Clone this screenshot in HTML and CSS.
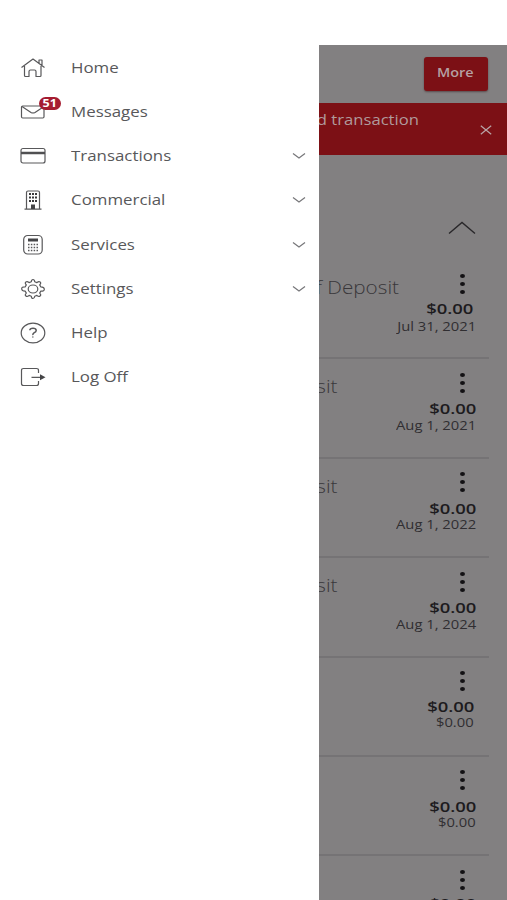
FILE: index.html
```html
<!DOCTYPE html>
<html lang="en">
<head>
<meta charset="utf-8">
<title>Accounts</title>
<link rel="stylesheet" href="styles.css">
</head>
<body>
<div class="app">
  <nav class="menu">
    <a class="item"><svg class="icon" viewBox="0 0 26 24"><path d="M1.500 11.500 13 3l11.500 8.500M4.500 10v9.500q0 1 1 1H9v-5q0-1.500 1.500-1.500h4q1.500 0 1.500 1.500v5h4q1 0 1-1V10M19 7V4h3v5"/></svg><span class="label">Home</span></a>
    <a class="item"><svg class="icon" viewBox="0 0 26 24"><rect x="1.500" y="6" width="22.500" height="12" rx="1.200"/><path d="m2 6.500 9 6q2 1 4 0l9-6"/></svg><b class="badge"><span>51</span></b><span class="label">Messages</span></a>
    <a class="item"><svg class="icon" viewBox="0 0 26 24"><rect x="1" y="4.500" width="24" height="14.500" rx="2"/><path class="thick" d="M1 9h24"/></svg><span class="label">Transactions</span><svg class="chevron" viewBox="0 0 14 8"><path d="m1 1.500 6 4.500 6-4.500"/></svg></a>
    <a class="item"><svg class="icon" viewBox="0 0 26 24"><path d="M6.500 21V4.500Q6.500 3 8 3h10q1.500 0 1.500 1.500V21M4.500 21.200h17"/><path class="dots" d="M9 6h2m1 0h2m1 0h2M9 9.500h2m1 0h2m1 0h2M9 13h2m1 0h2m1 0h2"/><path class="solid" d="M11 21v-4.500h4V21z"/></svg><span class="label">Commercial</span><svg class="chevron" viewBox="0 0 14 8"><path d="m1 1.500 6 4.500 6-4.500"/></svg></a>
    <a class="item"><svg class="icon" viewBox="0 0 26 24"><rect x="3.700" y="2.500" width="18.500" height="18.500" rx="4"/><path class="solid" d="M8 5.500h10v3H8z"/><path class="keys" d="M8 11.500h10M8 14.500h10M8 17.500h10"/></svg><span class="label">Services</span><svg class="chevron" viewBox="0 0 14 8"><path d="m1 1.500 6 4.500 6-4.500"/></svg></a>
    <a class="item"><svg class="icon" viewBox="0 0 26 24"><ellipse cx="13" cy="12" rx="4.800" ry="4"/><path d="M11.300 4.800Q11.500 2.500 13 2.500t1.700 2.300l2.200.8q1.800-1.700 3.200-.7t-.4 3l1 1.900q3.300-.1 3.600 2.200t-3.600 2.200l-1 1.900q1.800 1.800.4 2.900t-3.200-.6l-2.200.8Q14.500 21.500 13 21.500t-1.700-2.300l-2.200-.8q-1.800 1.700-3.200.6t.4-2.900l-1-1.900Q2 14.300 1.700 12t3.600-2.200l1-1.900Q4.500 5.900 5.900 4.900t3.200.7z"/></svg><span class="label">Settings</span><svg class="chevron" viewBox="0 0 14 8"><path d="m1 1.500 6 4.500 6-4.500"/></svg></a>
    <a class="item"><svg class="icon" viewBox="0 0 26 24"><ellipse cx="13" cy="12" rx="11.800" ry="9.800"/><path class="mark" d="M9.800 9.300Q10 7.300 13 7.300t3.200 2.100Q16.200 10.800 14 11.800q-1.300.7-1.200 2.300M12.800 15.400v1.200"/></svg><span class="label">Help</span></a>
    <a class="item"><svg class="icon" viewBox="0 0 26 24"><path d="M18.500 8V5.500q0-2-2-2H3.500q-2 0-2 2v13q0 2 2 2h13q2 0 2-2V16M11.500 12.300H21"/><path class="solid" d="M20 9.300v6l5.500-3z"/></svg><span class="label">Log Off</span></a>
  </nav>
  <main class="page">
    <header class="bar"><button class="more"><span>More</span></button></header>
    <section class="alert"><span class="alert-text">d transaction</span><svg class="close" viewBox="0 0 12 10"><path d="m.8.800 10.400 8.400m0-8.400L.8 9.200"/></svg></section>
    <div class="group"><svg class="collapse" viewBox="0 0 28 14"><path d="M1 12.500 14 1.500l13 11"/></svg></div>
    <div class="accounts">
      <article class="row first"><h2 class="name long">f Deposit</h2><div class="dots-menu"><i></i><i></i><i></i></div><strong class="amount">$0.00</strong><span class="detail">Jul 31, 2021</span></article>
      <article class="row"><h2 class="name">sit</h2><div class="dots-menu"><i></i><i></i><i></i></div><strong class="amount">$0.00</strong><span class="detail">Aug 1, 2021</span></article>
      <article class="row"><h2 class="name">sit</h2><div class="dots-menu"><i></i><i></i><i></i></div><strong class="amount">$0.00</strong><span class="detail">Aug 1, 2022</span></article>
      <article class="row"><h2 class="name">sit</h2><div class="dots-menu"><i></i><i></i><i></i></div><strong class="amount">$0.00</strong><span class="detail">Aug 1, 2024</span></article>
      <article class="row inset"><div class="dots-menu"><i></i><i></i><i></i></div><strong class="amount">$0.00</strong><span class="detail">$0.00</span></article>
      <article class="row"><div class="dots-menu"><i></i><i></i><i></i></div><strong class="amount">$0.00</strong><span class="detail">$0.00</span></article>
      <article class="row last"><div class="dots-menu"><i></i><i></i><i></i></div><strong class="amount">$0.00</strong></article>
    </div>
  </main>
</div>
</body>
</html>
```
FILE: styles.css
```css
* { box-sizing: border-box; }
body { margin: 0; background: #fff; font-family: "Open Sans", sans-serif; overflow: hidden; }
.app { display: flex; height: 900px; overflow: hidden; }

.menu { width: 319px; flex: none; padding-top: 46px; }
.item { position: relative; display: flex; align-items: center; height: 44.150px; padding: 0 13px 0 20px; color: #58585a; }
.icon { width: 26px; height: 24px; flex: none; fill: none; stroke: #58585a; stroke-width: 1.200; stroke-linejoin: round; }
.icon .thick { stroke-width: 2.500; stroke: #505052; }
.icon .solid { fill: #444446; stroke: none; }
.icon .dots { stroke: #39393b; stroke-width: 2; }
.icon .keys { stroke-width: 1.500; stroke-dasharray: 1.500 1.330; }
.icon .mark { stroke-width: 1.500; }
.label { margin-left: 24.500px; font-size: 14px; line-height: 20px; white-space: nowrap; transform: scaleX(1.205); transform-origin: left; }
.chevron { width: 14px; height: 8px; margin-left: auto; fill: none; stroke: #77777a; stroke-width: 1.200; }
.badge { position: absolute; left: 39px; top: 7px; width: 22px; height: 13px; border-radius: 7px; background: #a51c30; color: #fff; font-size: 10px; line-height: 13px; text-align: center; }
.badge span { display: inline-block; transform: scaleX(1.250); }

.page { flex: 1; min-width: 0; margin-top: 45px; height: 855px; background: #828081; overflow: hidden; }
.bar { display: flex; justify-content: flex-end; height: 58px; padding: 12px 19px 0 0; }
.more { width: 64px; height: 34px; padding: 0 0 2px 0; border: 0; border-radius: 3px; background: #7c1015; color: #b5a1a3; font: 600 12px/18px "Open Sans", sans-serif; box-shadow: 0 1px 2px #5a4a4c; }
.more span { display: inline-block; transform: translateX(-1px) scaleX(1.200); }
.alert { display: flex; justify-content: space-between; height: 52px; padding: 7px 15px 0 0; background: #7c1015; color: #b09a9c; }
.alert-text { width: 100px; display: flex; justify-content: flex-end; font-size: 14px; line-height: 20px; white-space: nowrap; transform: scaleX(1.190); transform-origin: right; }
.close { width: 12px; height: 10px; margin-top: 15px; fill: none; stroke: #b9a5a7; stroke-width: 1.200; }
.group { display: flex; justify-content: flex-end; height: 105px; padding: 66px 31px 0 0; }
.collapse { width: 28px; height: 14px; fill: none; stroke: #29272a; stroke-width: 1.400; }

.accounts { margin-right: 18px; }
.row { display: grid; grid-template-columns: minmax(0, 1fr) 88px; grid-template-rows: 40px 18.500px 17px; height: 99.400px; padding-right: 13px; border-bottom: 2px solid #757375; justify-items: end; }
.name { grid-column: 1 / -1; grid-row: 1; margin: 14px 0 0; justify-self: start; width: 18.500px; display: flex; justify-content: flex-end; color: #39373a; font-size: 18px; font-weight: 300; line-height: 26px; white-space: nowrap; transform: scaleX(1.150); transform-origin: right; }
.name.long { width: 80px; }
.dots-menu { grid-column: 2; grid-row: 1; display: flex; flex-direction: column; gap: 4px; margin: 13.500px 11px 0 0; }
.dots-menu i { width: 5px; height: 4px; border-radius: 50%; background: #131114; }
.amount, .detail { grid-column: 2; white-space: nowrap; transform: scaleX(1.230); transform-origin: right; }
.amount { grid-row: 2; color: #1d1b1e; font-size: 15px; font-weight: 600; line-height: 19px; }
.detail { grid-row: 3; color: #302e31; font-size: 12px; line-height: 16px; }
.first .amount { margin-right: 3px; margin-top: -1px; }
.inset .amount, .inset .detail { margin-right: 2px; margin-top: -1px; }
.last .amount { margin-top: -2px; }
```
